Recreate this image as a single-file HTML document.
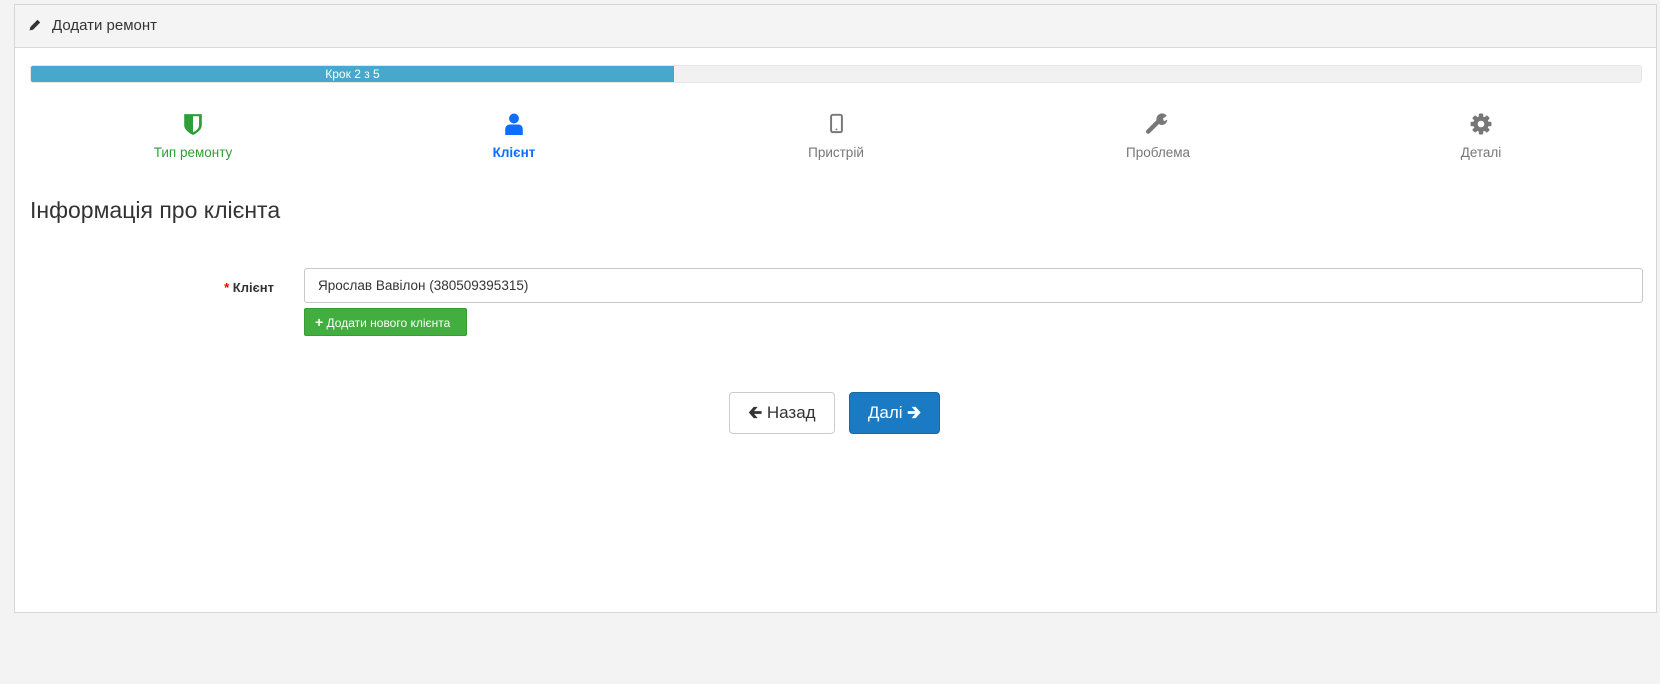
<!DOCTYPE html>
<html><head><meta charset="utf-8"><style>
*{box-sizing:border-box;margin:0;padding:0}
body{width:1660px;height:684px;background:#f3f3f3;font-family:"Liberation Sans",sans-serif;position:relative;overflow:hidden;color:#333}
.panel{position:absolute;left:14px;top:4px;width:1643px;height:609px;background:#fff;border:1px solid #d6d6d6}
.head{position:absolute;left:0;top:0;right:0;height:43px;background:#f4f4f4;border-bottom:1px solid #dadada}
.head span{position:absolute;left:37px;top:12px;font-size:15px;color:#333}
.abs{position:absolute}
.prog{left:15px;top:60px;width:1612px;height:18px;background:#f1f1f1;border-radius:3px;border:1px solid #e6e6e6;overflow:hidden}
.fill{position:absolute;left:0;top:0;bottom:0;width:643px;background:#47a8cc;color:#fff;font-size:12px;text-align:center;line-height:16px}
.step{position:absolute;top:108px;width:200px;text-align:center;font-size:13.5px}
.step svg{display:block;margin:0 auto 10px}
h3{position:absolute;left:15px;top:192px;font-weight:normal;font-size:23px;color:#333}
.lbl{position:absolute;left:180px;width:79px;text-align:right;top:275px;font-size:13px;font-weight:bold;color:#333}
.inp{position:absolute;left:289px;top:263px;width:1339px;height:35px;border:1px solid #c7c7c7;border-radius:3px;font-size:13.5px;padding:9px 13px}
.gbtn{position:absolute;left:289px;top:303px;width:163px;height:28px;background:#42ae3f;border:1px solid #399a36;border-radius:2px;color:#fff;font-size:12px;line-height:26px;padding-left:10px}
.btn{position:absolute;top:387px;height:42px;border-radius:4px;font-size:17px;line-height:40px;text-align:center}
</style></head><body>
<div class="panel">
<div class="head">
<svg class="abs" style="left:14px;top:14px" width="12" height="12" viewBox="0 0 12 12"><path d="M8.5 0.8 L11.2 3.5 L4 10.7 L0.6 11.4 L1.3 8 Z" fill="#333"/></svg>
<span>Додати ремонт</span></div>
<div class="abs prog"><div class="fill">Крок 2 з 5</div></div>
<div class="step" style="left:78px;color:#2f9e37"><svg width="20" height="22" viewBox="0 0 18 20"><path d="M1 1H17V11C17 15 13 18 9 20C5 18 1 15 1 11Z" fill="#2f9e37"/><path d="M9 3H14.5V11C14.5 14 12 16 9 17.5Z" fill="#fff"/></svg>Тип ремонту</div>
<div class="step" style="left:399px;color:#0d6efd;font-weight:bold"><svg width="20" height="22" viewBox="0 0 18 20"><circle cx="9" cy="5" r="4.5" fill="#0d6efd"/><path d="M1 20V15C1 12 3 10.5 5 10.5H13C15 10.5 17 12 17 15V20Z" fill="#0d6efd"/></svg>Клієнт</div>
<div class="step" style="left:721px;color:#777"><svg width="13" height="22" viewBox="0 0 12 20"><rect x="1" y="1.5" width="10" height="16" rx="1.5" fill="none" stroke="#777" stroke-width="1.8"/><circle cx="6" cy="15" r="0.9" fill="#777"/></svg>Пристрій</div>
<div class="step" style="left:1043px;color:#777"><svg width="24" height="22" viewBox="0 0 22 20"><path d="M2 17L11 8" stroke="#777" stroke-width="4" stroke-linecap="round"/><path d="M10.5 8.5A5 5 0 0 1 19 2.5L15.5 5L16.5 7.5L19.5 6A5 5 0 0 1 12.5 10.5Z" fill="#777"/></svg>Проблема</div>
<div class="step" style="left:1366px;color:#777"><svg width="22" height="22" viewBox="0 0 20 20"><g fill="#777"><circle cx="10" cy="10" r="7"/><rect x="8" y="0.5" width="4" height="19" rx="1"/><rect x="0.5" y="8" width="19" height="4" rx="1"/><rect x="8" y="0.5" width="4" height="19" rx="1" transform="rotate(45 10 10)"/><rect x="8" y="0.5" width="4" height="19" rx="1" transform="rotate(-45 10 10)"/></g><circle cx="10" cy="10" r="3" fill="#fff"/></svg>Деталі</div>
<h3>Інформація про клієнта</h3>
<div class="lbl"><span style="color:#e00">*</span> Клієнт</div>
<div class="inp">Ярослав Вавілон (380509395315)</div>
<div class="gbtn"><b style="font-size:14px">+</b> Додати нового клієнта</div>
<div class="btn" style="left:714px;width:106px;border:1px solid #ccc;background:#fff;color:#333"><b>&#129136;</b> Назад</div>
<div class="btn" style="left:834px;width:91px;background:#1a7bc4;border:1px solid #16689f;color:#fff">Далі <b>&#129138;</b></div>
</div>
</body></html>
